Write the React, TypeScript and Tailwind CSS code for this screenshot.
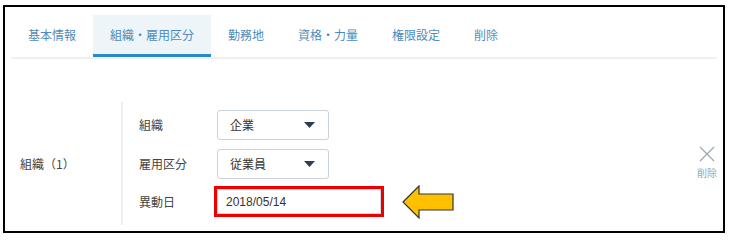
const jp = { fontFamily: '"Noto Sans CJK JP", "Noto Sans", sans-serif' };

const tabs = ["基本情報", "組織・雇用区分", "勤務地", "資格・力量", "権限設定", "削除"];

function Caret() {
  return (
    <svg width="11" height="6" viewBox="0 0 11 6">
      <polygon points="0,0 11,0 5.5,6" fill="#2c3e50" />
    </svg>
  );
}

function SelectBox({ value }: { value: string }) {
  return (
    <div className="flex h-[30px] w-[112px] items-center justify-between rounded-[3px] border border-[#c9d3dc] bg-white pl-[12px] pr-[13px] text-[12px] text-[#333]">
      <span>{value}</span>
      <Caret />
    </div>
  );
}

export default function App() {
  return (
    <div className="h-[242px] w-[734px] bg-white" style={jp}>
      <div className="ml-[3px] mt-[5px] h-[228px] w-[722px] border-2 border-black px-[6px]">
        {/* Tabs */}
        <div className="mt-[8px] flex border-b-2 border-[#f0f0f0]">
          {tabs.map((t, i) => (
            <div
              key={t}
              className={`flex h-[42px] items-center border-b-[3px] px-[17px] pt-[1px] text-[12px] text-[#4f8cbb] ${
                i === 1 ? "border-[#2a8ac8] bg-[#eef5f9]" : "border-transparent"
              }`}
            >
              {t}
            </div>
          ))}
        </div>

        {/* Body */}
        <div className="mt-[43px] flex">
          <div className="flex w-[110px] items-center pl-[9px] text-[12px] text-[#444]">
            組織（1）
          </div>
          <div className="h-[123px] w-[2px] bg-[#edf0f2]" />
          <div className="flex flex-col pl-[16px] pt-[8px] text-[12px] text-[#444]">
            <div className="flex h-[30px] items-center">
              <span className="w-[78px]">組織</span>
              <SelectBox value="企業" />
            </div>
            <div className="mt-[9px] flex h-[30px] items-center">
              <span className="w-[78px]">雇用区分</span>
              <SelectBox value="従業員" />
            </div>
            <div className="mt-[7px] flex h-[31px] items-center">
              <span className="w-[75px]">異動日</span>
              <div className="flex h-[31px] w-[170px] items-center border-[3px] border-[#ee0000] p-0">
                <div
                  className="flex h-full w-full items-center border border-[#d3dbe2] pl-[8px] text-[12px] text-[#333]"
                  style={{ fontFamily: '"Liberation Sans", Arial, sans-serif' }}
                >
                  2018/05/14
                </div>
              </div>
              <svg width="54" height="34" viewBox="0 0 54 34" className="ml-[18px]">
                <polygon
                  points="1,17 17,1 17,9 51,9 51,25 17,25 17,33"
                  fill="#ffc000"
                  stroke="#333"
                  strokeWidth="1.2"
                  strokeLinejoin="miter"
                />
              </svg>
            </div>
          </div>
          <div className="ml-auto flex flex-col items-center pt-[44px]">
            <svg width="16" height="16" viewBox="0 0 16 16">
              <path d="M1 1 L15 15 M15 1 L1 15" stroke="#9aa6b1" strokeWidth="1.2" />
            </svg>
            <span className="mt-[3px] text-[10px] text-[#9aa6b1]">削除</span>
          </div>
        </div>
      </div>
    </div>
  );
}
